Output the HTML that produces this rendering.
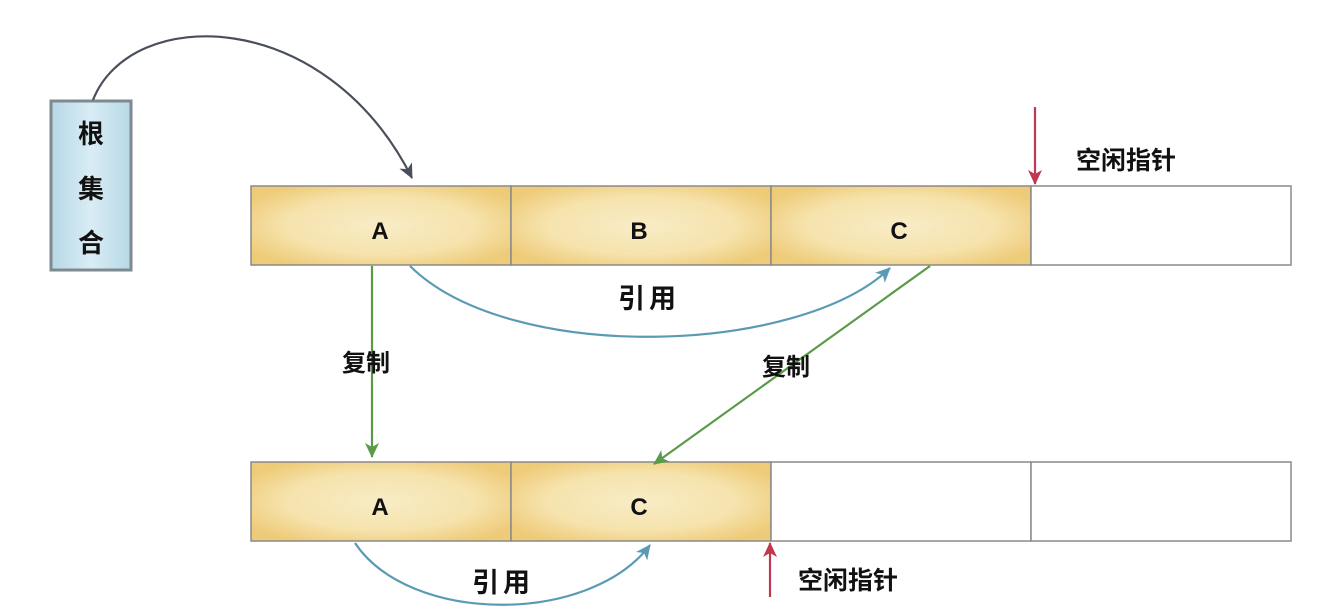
<!DOCTYPE html>
<html><head><meta charset="utf-8"><style>
html,body{margin:0;padding:0;background:#fff;}
svg{display:block}
text{font-family:"Liberation Sans","Noto Sans CJK SC",sans-serif;font-weight:bold;fill:#111}
</style></head><body>
<svg width="1320" height="606" viewBox="0 0 1320 606" xmlns="http://www.w3.org/2000/svg">
<defs>
<radialGradient id="g" cx="0.5" cy="0.5" r="0.6">
<stop offset="0" stop-color="#f8ecc6"/><stop offset="0.6" stop-color="#f6e3ad"/><stop offset="1" stop-color="#eecb78"/>
</radialGradient>
<linearGradient id="b" x1="0" x2="1">
<stop offset="0" stop-color="#b6d8e6"/><stop offset="0.5" stop-color="#d9edf5"/><stop offset="1" stop-color="#b6d8e6"/>
</linearGradient>
<marker id="md" markerWidth="16" markerHeight="16" refX="14" refY="8" orient="auto" markerUnits="userSpaceOnUse"><path d="M0,1 L15,8 L0,15 L4,8z" fill="#4a4f5c"/></marker>
<marker id="mb" markerWidth="16" markerHeight="16" refX="14" refY="8" orient="auto" markerUnits="userSpaceOnUse"><path d="M0,1 L15,8 L0,15 L4,8z" fill="#5a9ab5"/></marker>
<marker id="mg" markerWidth="16" markerHeight="16" refX="14" refY="8" orient="auto" markerUnits="userSpaceOnUse"><path d="M0,1 L15,8 L0,15 L4,8z" fill="#5a9a48"/></marker>
<marker id="mr" markerWidth="16" markerHeight="16" refX="14" refY="8" orient="auto" markerUnits="userSpaceOnUse"><path d="M0,1 L15,8 L0,15 L4,8z" fill="#c0384f"/></marker>
</defs>
<rect x="51" y="101" width="80" height="169" fill="url(#b)" stroke="#7e8a90" stroke-width="3"/>
<text x="91" y="143" font-size="26" text-anchor="middle">根</text>
<text x="91" y="198" font-size="26" text-anchor="middle">集</text>
<text x="91" y="252" font-size="26" text-anchor="middle">合</text>
<g stroke="#8a8a8a" stroke-width="1.5">
<rect x="251" y="186" width="260" height="79" fill="url(#g)"/>
<rect x="511" y="186" width="260" height="79" fill="url(#g)"/>
<rect x="771" y="186" width="260" height="79" fill="url(#g)"/>
<rect x="1031" y="186" width="260" height="79" fill="#fff"/>
<rect x="251" y="462" width="260" height="79" fill="url(#g)"/>
<rect x="511" y="462" width="260" height="79" fill="url(#g)"/>
<rect x="771" y="462" width="260" height="79" fill="#fff"/>
<rect x="1031" y="462" width="260" height="79" fill="#fff"/>
</g>
<text x="380" y="239" font-size="24" text-anchor="middle">A</text>
<text x="639" y="239" font-size="24" text-anchor="middle">B</text>
<text x="899" y="239" font-size="24" text-anchor="middle">C</text>
<text x="380" y="515" font-size="24" text-anchor="middle">A</text>
<text x="639" y="515" font-size="24" text-anchor="middle">C</text>
<g fill="none" stroke-width="2.2">
<path d="M93,100 C130,5 325,5 412,178" stroke="#4a4f5c" marker-end="url(#md)"/>
<path d="M410,266 C510,365 800,355 890,268" stroke="#5a9ab5" marker-end="url(#mb)"/>
<path d="M355,543 C410,625 590,625 650,545" stroke="#5a9ab5" marker-end="url(#mb)"/>
<path d="M372,266 L372,457" stroke="#5a9a48" marker-end="url(#mg)"/>
<path d="M930,266 L654,464" stroke="#5a9a48" marker-end="url(#mg)"/>
<path d="M1035,107 L1035,184" stroke="#c0384f" marker-end="url(#mr)"/>
<path d="M770,597 L770,543" stroke="#c0384f" marker-end="url(#mr)"/>
</g>
<text x="649" y="308" font-size="27" text-anchor="middle" letter-spacing="4">引用</text>
<text x="503" y="592" font-size="27" text-anchor="middle" letter-spacing="4">引用</text>
<text x="366" y="371" font-size="24" text-anchor="middle">复制</text>
<text x="786" y="375" font-size="24" text-anchor="middle">复制</text>
<text x="1126" y="169" font-size="25" text-anchor="middle">空闲指针</text>
<text x="848" y="589" font-size="25" text-anchor="middle">空闲指针</text>
</svg>
</body></html>
